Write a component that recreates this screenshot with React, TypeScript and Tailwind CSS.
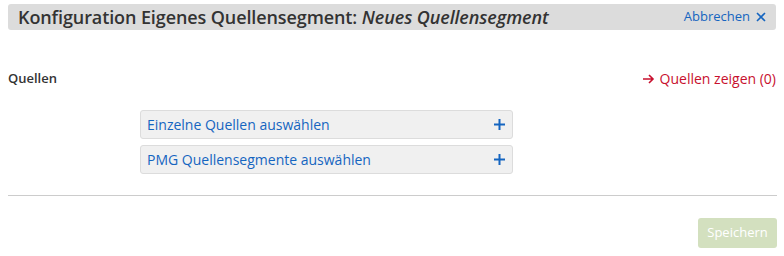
import React from "react";

export default function App() {
  return (
    <div className="w-[784px] h-[256px] bg-white px-2 pt-1 text-[#333]" style={{ fontFamily: '"Open Sans", "Noto Sans", sans-serif' }}>
      <div className="flex h-[26px] items-center justify-between rounded-[3px] bg-[#dcdcdc] pl-[10px] pr-[10px]">
        <div className="text-[18px] font-semibold leading-none tracking-[-0.1px] text-[#333]">
          Konfiguration Eigenes Quellensegment: <span className="italic">Neues Quellensegment</span>
        </div>
        <div className="flex items-center gap-[6px] text-[13px] text-[#1565c0]">
          <span>Abbrechen</span>
          <svg width="10" height="10" viewBox="0 0 10 10" fill="none" stroke="#1565c0" strokeWidth="1.6">
            <path d="M1 1L9 9M9 1L1 9" />
          </svg>
        </div>
      </div>

      <div className="mt-[38px] flex items-center justify-between">
        <div className="text-[13px] font-semibold text-[#333]">Quellen</div>
        <div className="flex items-center gap-[5px] text-[14px] text-[#c8102e]">
          <svg width="13" height="12" viewBox="0 0 13 12" fill="none" stroke="#c8102e" strokeWidth="1.6">
            <path d="M1 6H11M7 2L11 6L7 10" />
          </svg>
          <span>Quellen zeigen (0)</span>
        </div>
      </div>

      <div className="ml-[132px] mt-[21px] flex w-[373px] flex-col gap-[6px]">
        <div className="flex h-[29px] items-center justify-between rounded-[3px] border border-[#dcdcdc] bg-[#f0f0f0] pl-[6px] pr-[7px] text-[14px] text-[#1565c0]">
          <span>Einzelne Quellen auswählen</span>
          <svg width="11" height="11" viewBox="0 0 11 11" stroke="#1565c0" strokeWidth="2">
            <path d="M5.5 0V11M0 5.5H11" />
          </svg>
        </div>
        <div className="flex h-[29px] items-center justify-between rounded-[3px] border border-[#dcdcdc] bg-[#f0f0f0] pl-[6px] pr-[7px] text-[14px] text-[#1565c0]">
          <span>PMG Quellensegmente auswählen</span>
          <svg width="11" height="11" viewBox="0 0 11 11" stroke="#1565c0" strokeWidth="2">
            <path d="M5.5 0V11M0 5.5H11" />
          </svg>
        </div>
      </div>

      <div className="mt-[21px] h-px w-[769px] bg-[#cccccc]" />

      <div className="mt-[22px] flex w-[769px] justify-end">
        <button className="h-[30px] w-[79px] rounded-[3px] bg-[#d3e0bf] text-[13px] text-white">Speichern</button>
      </div>
    </div>
  );
}
